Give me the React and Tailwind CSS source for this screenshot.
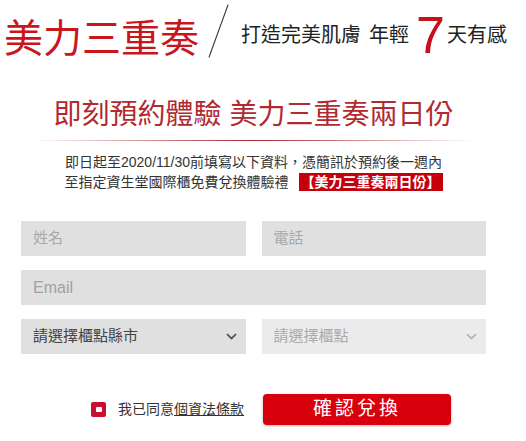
export default function App() {
  const font = { fontFamily: '"Liberation Sans", "Noto Sans CJK TC", sans-serif' };
  return (
    <div className="w-[526px] h-[441px] bg-white overflow-hidden" style={font}>
      <div className="w-[507px]">
        {/* header */}
        <div className="flex items-start pl-[4px] h-[101px]">
          <span className="text-[39px] leading-[39px] mt-[19px] text-[#c8161d] whitespace-nowrap">美力三重奏</span>
          <svg className="ml-[9px] mt-[3px]" width="22" height="56" viewBox="0 0 22 56">
            <line x1="21" y1="0.5" x2="1" y2="55.5" stroke="#333" strokeWidth="1.2" />
          </svg>
          <div className="ml-[12px] mt-[17px] flex items-center h-[36px] whitespace-nowrap text-[#222]">
            <span className="text-[20px] leading-[20px]">打造完美肌膚</span>
            <span className="text-[20px] leading-[20px] ml-[8px]">年輕</span>
            <span className="text-[52px] leading-[36px] ml-[7px] text-[#c8101c]">7</span>
            <span className="text-[20px] leading-[20px] ml-[2px]">天有感</span>
          </div>
        </div>

        {/* title */}
        <div className="flex flex-col items-center">
          <div className="text-[28px] leading-[28px] text-[#b02a2f] whitespace-nowrap">
            即刻預約體驗 美力三重奏兩日份
          </div>
          <div className="mt-[11px] h-[1px] w-[446px] bg-[linear-gradient(to_right,rgba(179,35,42,0),#a8272c_50%,rgba(179,35,42,0))]" />
          <div className="mt-[11px] text-[14px] leading-[20px] text-[#333] whitespace-nowrap">
            即日起至2020/11/30前填寫以下資料，憑簡訊於預約後一週內
          </div>
          <div className="flex items-center text-[14px] leading-[20px] text-[#333] whitespace-nowrap">
            <span>至指定資生堂國際櫃免費兌換體驗禮</span>
            <span className="ml-[10px] bg-[#c4000b] text-white font-bold h-[18px] leading-[18px] px-[2px]">【美力三重奏兩日份】</span>
          </div>
        </div>

        {/* form */}
        <div className="px-[21px] mt-[29px] flex flex-col gap-[14px] text-[15px]">
          <div className="grid grid-cols-2 gap-[16px]">
            <div className="h-[35px] bg-[#e0e0e0] flex items-center pl-[12px] text-[#a8a8a8]">姓名</div>
            <div className="h-[35px] bg-[#e0e0e0] flex items-center pl-[12px] text-[#a8a8a8]">電話</div>
          </div>
          <div className="h-[35px] bg-[#e0e0e0] flex items-center pl-[12px] text-[#a0a0a0] text-[16px]">Email</div>
          <div className="grid grid-cols-2 gap-[16px]">
            <div className="h-[35px] bg-[#e0e0e0] flex items-center justify-between pl-[12px] pr-[9px] text-[#444]">
              <span>請選擇櫃點縣市</span>
              <svg width="11" height="7" viewBox="0 0 11 7"><path d="M1 1.2 L5.5 5.5 L10 1.2" fill="none" stroke="#555" strokeWidth="1.8" /></svg>
            </div>
            <div className="h-[35px] bg-[#ebebeb] flex items-center justify-between pl-[12px] pr-[9px] text-[#aaa]">
              <span>請選擇櫃點</span>
              <svg width="11" height="7" viewBox="0 0 11 7"><path d="M1 1.2 L5.5 5.5 L10 1.2" fill="none" stroke="#aaa" strokeWidth="1.5" /></svg>
            </div>
          </div>
        </div>

        {/* bottom */}
        <div className="flex items-center pl-[91px] mt-[40px]">
          <div className="w-[15px] h-[15px] rounded-[2px] bg-[#c8102e] flex items-center justify-center">
            <div className="w-[6px] h-[5px] bg-white rounded-[1px]" />
          </div>
          <span className="ml-[12px] text-[14px] text-[#333] whitespace-nowrap">
            我已同意<span className="underline">個資法條款</span>
          </span>
          <button className="ml-[19px] w-[188px] h-[31px] rounded-[4px] bg-[#d9000d] text-white text-[19px] tracking-[3px] shadow-[0_1px_3px_rgba(0,0,0,0.3)]">
            確認兌換
          </button>
        </div>
      </div>
    </div>
  );
}
